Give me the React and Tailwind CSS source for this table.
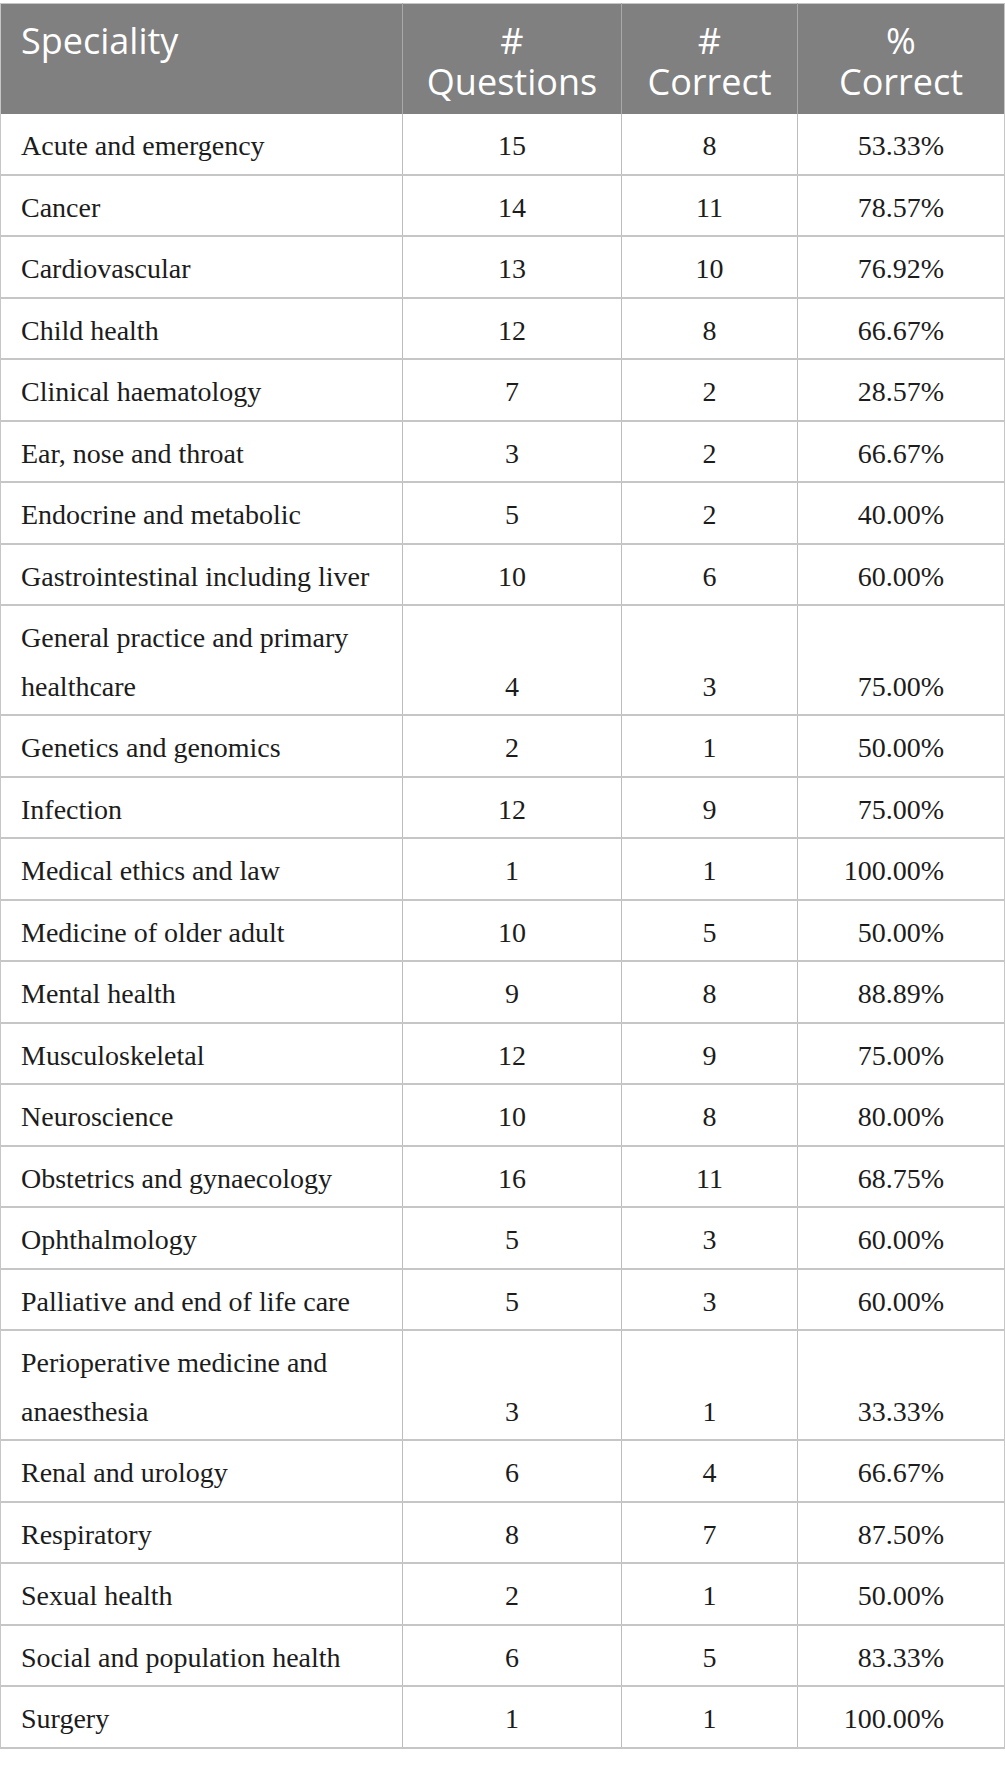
const rows = [
  ["Acute and emergency", 15, 8, "53.33%"],
  ["Cancer", 14, 11, "78.57%"],
  ["Cardiovascular", 13, 10, "76.92%"],
  ["Child health", 12, 8, "66.67%"],
  ["Clinical haematology", 7, 2, "28.57%"],
  ["Ear, nose and throat", 3, 2, "66.67%"],
  ["Endocrine and metabolic", 5, 2, "40.00%"],
  ["Gastrointestinal including liver", 10, 6, "60.00%"],
  ["General practice and primary healthcare", 4, 3, "75.00%"],
  ["Genetics and genomics", 2, 1, "50.00%"],
  ["Infection", 12, 9, "75.00%"],
  ["Medical ethics and law", 1, 1, "100.00%"],
  ["Medicine of older adult", 10, 5, "50.00%"],
  ["Mental health", 9, 8, "88.89%"],
  ["Musculoskeletal", 12, 9, "75.00%"],
  ["Neuroscience", 10, 8, "80.00%"],
  ["Obstetrics and gynaecology", 16, 11, "68.75%"],
  ["Ophthalmology", 5, 3, "60.00%"],
  ["Palliative and end of life care", 5, 3, "60.00%"],
  ["Perioperative medicine and anaesthesia", 3, 1, "33.33%"],
  ["Renal and urology", 6, 4, "66.67%"],
  ["Respiratory", 8, 7, "87.50%"],
  ["Sexual health", 2, 1, "50.00%"],
  ["Social and population health", 6, 5, "83.33%"],
  ["Surgery", 1, 1, "100.00%"],
]

export default function App() {
  const cell = "border-x border-x-[#bdbdbd] border-b-2 border-b-[#c6c6c6] align-bottom pt-[8px] pb-[3px] leading-[48.5px]"
  const head = "border-x border-x-[#a9a9a9] pt-[16px] pb-[12px] leading-[41px] font-normal"

  return (
    <div className="bg-white min-h-screen pt-[3px]">
      <table className="w-[1004px] table-fixed border-collapse border-t border-t-[#c6c6c6] text-[28px] text-[#1c1c1c] font-['Liberation_Serif',serif]">
        <colgroup>
          <col className="w-[402px]" />
          <col className="w-[219px]" />
          <col className="w-[176px]" />
          <col className="w-[207px]" />
        </colgroup>
        <thead>
          <tr className="bg-[#808080] text-white text-[36px] font-['Open_Sans',sans-serif]">
            <th className={`${head} text-left align-top pl-[20px] border-l-[#c6c6c6]`}>Speciality</th>
            <th className={`${head} text-center`}>#<br />Questions</th>
            <th className={`${head} text-center`}>#<br />Correct</th>
            <th className={`${head} text-center border-r-[#c6c6c6]`}>%<br />Correct</th>
          </tr>
        </thead>
        <tbody>
          {rows.map(([name, q, c, pct]) => (
            <tr key={name}>
              <td className={`${cell} text-left pl-[20px] pr-[10px] border-l-[#c6c6c6]`}>{name}</td>
              <td className={`${cell} text-center`}>{q}</td>
              <td className={`${cell} text-center`}>{c}</td>
              <td className={`${cell} text-right pr-[60px] border-r-[#c6c6c6]`}>{pct}</td>
            </tr>
          ))}
        </tbody>
      </table>
    </div>
  )
}
